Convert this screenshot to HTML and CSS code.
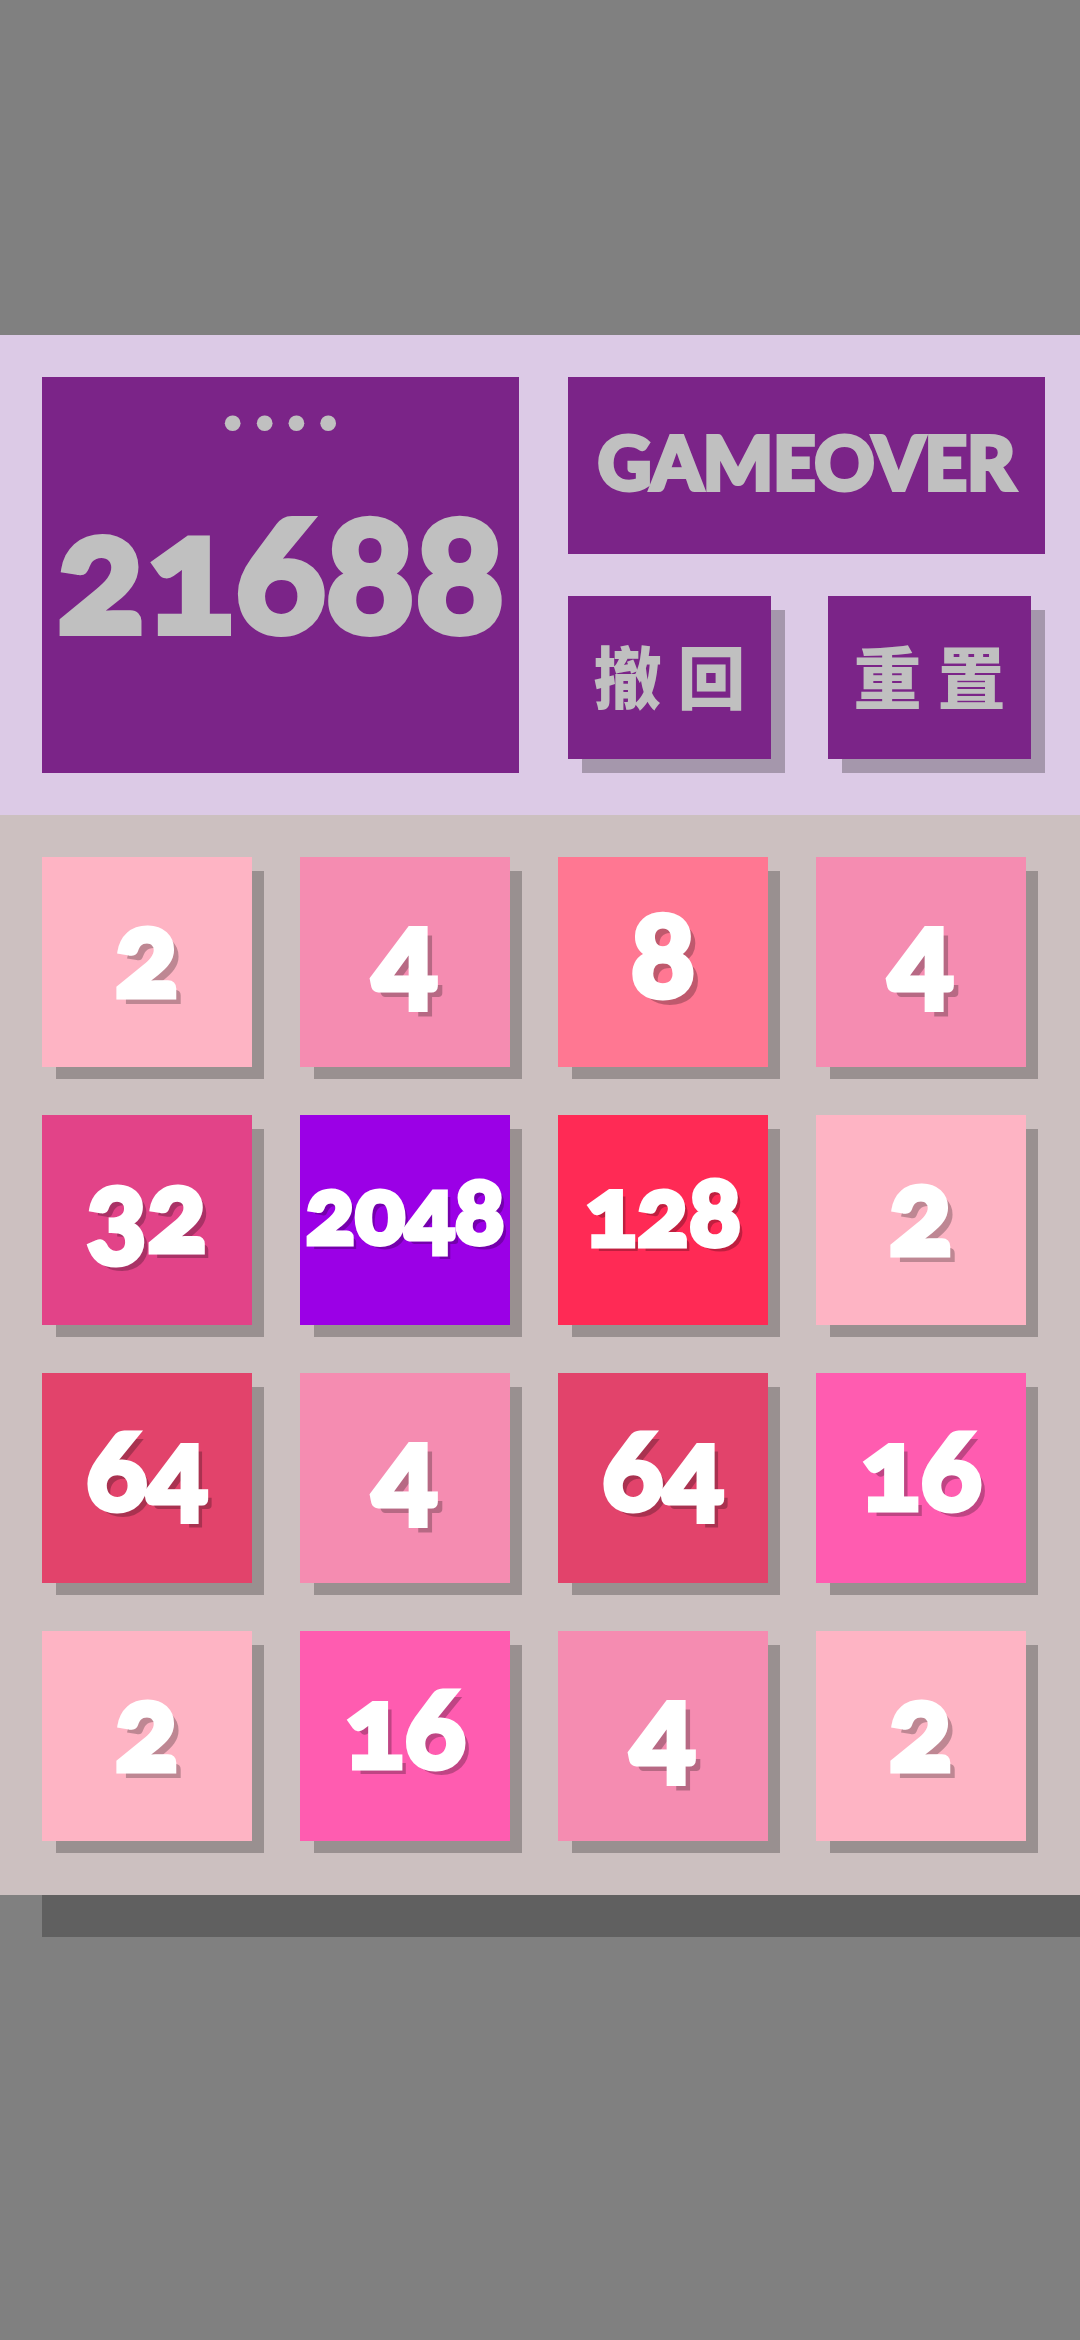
FILE: index.html
```html
<!DOCTYPE html>
<html lang="zh-CN">
<head>
<meta charset="utf-8">
<meta name="viewport" content="width=device-width, initial-scale=1">
<title>2048</title>
<link rel="stylesheet" href="styles.css">
</head>
<body>
<main class="game">
  <header class="panel">
    <section class="score">
      <div class="score-label">••••</div>
      <div class="score-value">21688</div>
    </section>
    <div class="side">
      <h1 class="status">GAMEOVER</h1>
      <div class="actions">
        <button class="action" type="button"><span>撤</span><span>回</span></button>
        <button class="action" type="button"><span>重</span><span>置</span></button>
      </div>
    </div>
  </header>
  <section class="board">
    <div class="tile t2">2</div>
    <div class="tile t4">4</div>
    <div class="tile t8">8</div>
    <div class="tile t4">4</div>
    <div class="tile t32">32</div>
    <div class="tile t2048">2048</div>
    <div class="tile t128">128</div>
    <div class="tile t2">2</div>
    <div class="tile t64">64</div>
    <div class="tile t4">4</div>
    <div class="tile t64">64</div>
    <div class="tile t16">16</div>
    <div class="tile t2">2</div>
    <div class="tile t16">16</div>
    <div class="tile t4">4</div>
    <div class="tile t2">2</div>
  </section>
  <div class="ledge"></div>
</main>
</body>
</html>
```

FILE: styles.css
```css
* {
  box-sizing: border-box;
}

body {
  margin: 0;
  padding-top: 335px;
  background: #808080;
  font-family: Lato, "Noto Sans CJK SC", sans-serif;
  font-weight: 900;
  font-variant-numeric: oldstyle-nums;
}

.panel {
  display: grid;
  grid-template-columns: 1fr 1fr;
  column-gap: 49px;
  padding: 42px 35px 42px 42px;
  background: #dccae6;
  color: #c0c0c0;
}

.score {
  display: grid;
  grid-template-rows: 96px 1fr 96px;
  align-items: center;
  justify-items: center;
  min-width: 0;
  background: #7b2488;
}

.score-label {
  font-family: "DejaVu Sans", sans-serif;
  font-size: 54px;
  font-weight: 400;
  line-height: 64px;
}

.score-value {
  padding-bottom: 12px;
  font-size: 166px;
  line-height: 192px;
  -webkit-text-stroke: 6px currentColor;
}

.side {
  display: grid;
  grid-template-rows: 177px 177px;
  row-gap: 42px;
  min-width: 0;
}

.status {
  display: flex;
  align-items: center;
  justify-content: center;
  margin: 0;
  padding-bottom: 8px;
  background: #7b2488;
  font-size: 74px;
  font-weight: 900;
  line-height: 92px;
  -webkit-text-stroke: 4px currentColor;
}

.actions {
  display: grid;
  grid-template-columns: 1fr 1fr;
  column-gap: 57px;
  padding: 0 14px 14px 0;
}

.action {
  display: flex;
  align-items: center;
  justify-content: center;
  gap: 16px;
  padding: 0;
  border: 0;
  background: #7b2488;
  box-shadow: 14px 14px 0 rgba(0, 0, 0, 0.25);
  color: inherit;
  font: inherit;
  font-size: 68px;
  line-height: 88px;
}

.board {
  display: grid;
  grid-template-columns: repeat(4, 1fr);
  gap: 48px;
  padding: 42px 54px 54px 42px;
  background: #ccc0c0;
}

.tile {
  display: flex;
  align-items: center;
  justify-content: center;
  aspect-ratio: 1;
  min-width: 0;
  padding-bottom: 22px;
  box-shadow: 13px 13px 0 -1px rgba(0, 0, 0, 0.25);
  color: #fff;
  font-size: 120px;
  line-height: 140px;
  text-shadow: 7px 7px 0 rgba(0, 0, 0, 0.25);
  -webkit-text-stroke: 5px currentColor;
}

.t2 { background: #feb4c4; }
.t4 { background: #f58cb1; }
.t8 { background: #ff7792; }

.t16,
.t32,
.t64 {
  font-size: 112px;
  text-shadow: 6px 6px 0 rgba(0, 0, 0, 0.25);
}

.t16 { background: #ff5cb0; }
.t32 { background: #e24388; }
.t64 { background: #e2436b; }

.t128 {
  background: #ff2a55;
  font-size: 96px;
  text-shadow: 5px 5px 0 rgba(0, 0, 0, 0.25);
}

.t2048 {
  background: #9b00e6;
  font-size: 92px;
  text-shadow: 5px 5px 0 rgba(0, 0, 0, 0.25);
}

.ledge {
  height: 42px;
  margin-left: 42px;
  background: #606060;
}
```
